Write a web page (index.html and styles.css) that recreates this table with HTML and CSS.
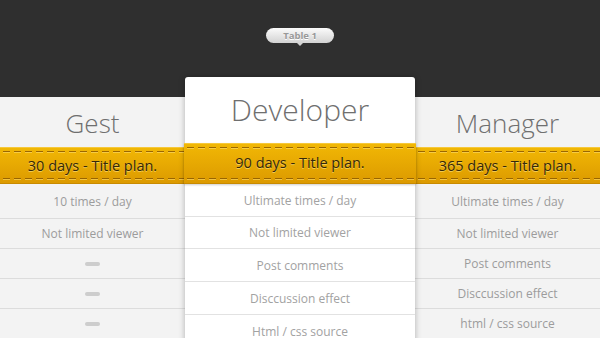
FILE: index.html
```html
<!DOCTYPE html>
<html>
<head>
<meta charset="utf-8">
<link rel="stylesheet" href="styles.css">
</head>
<body>
<div class="top">
  <div class="tip">Table 1</div>
</div>
<div class="table">
  <div class="col side">
    <div class="head">Gest</div>
    <div class="ribbon">30 days - Title plan.</div>
    <div class="row">10 times / day</div>
    <div class="row">Not limited viewer</div>
    <div class="row"><span class="dash"></span></div>
    <div class="row"><span class="dash"></span></div>
    <div class="row"><span class="dash"></span></div>
  </div>
  <div class="col dev">
    <div class="head">Developer</div>
    <div class="ribbon">90 days - Title plan.</div>
    <div class="row">Ultimate times / day</div>
    <div class="row">Not limited viewer</div>
    <div class="row">Post comments</div>
    <div class="row">Disccussion effect</div>
    <div class="row">Html / css source</div>
  </div>
  <div class="col side">
    <div class="head">Manager</div>
    <div class="ribbon">365 days - Title plan.</div>
    <div class="row">Ultimate times / day</div>
    <div class="row">Not limited viewer</div>
    <div class="row">Post comments</div>
    <div class="row">Disccussion effect</div>
    <div class="row">html / css source</div>
  </div>
</div>
</body>
</html>
```
FILE: styles.css
```css
html, body {
  margin: 0;
  padding: 0;
}
body {
  width: 600px;
  height: 338px;
  overflow: hidden;
  background: #f3f3f3;
  font-family: "Open Sans", "DejaVu Sans", sans-serif;
}
.top {
  height: 97px;
  background: #2f2f2f;
  display: flex;
  justify-content: center;
  align-items: flex-start;
}
.tip {
  position: relative;
  margin-top: 28px;
  width: 68px;
  height: 15px;
  border-radius: 8px;
  background: linear-gradient(#fbfbfb, #d2d2d2);
  color: #999;
  font-size: 9.5px;
  font-weight: 700;
  line-height: 15px;
  text-align: center;
  text-shadow: 0 1px 0 #fff;
}
.tip::after {
  content: "";
  position: absolute;
  left: 31px;
  top: 15px;
  border-left: 3px solid transparent;
  border-right: 3px solid transparent;
  border-top: 3px solid #d2d2d2;
}
.table {
  display: grid;
  grid-template-columns: 185px 230px 185px;
  margin-top: -20px;
  align-items: start;
}
.col {
  text-align: center;
}
.side {
  margin-top: 20px;
  background: #f3f3f3;
}
.dev {
  background: #fff;
  border-radius: 3px 3px 0 0;
  box-shadow: 0 0 6px rgba(0, 0, 0, 0.28);
  z-index: 2;
  position: relative;
}
.head {
  font-weight: 300;
  color: #6f6f6f;
}
.side .head {
  height: 50px;
  line-height: 52px;
  font-size: 26px;
}
.dev .head {
  height: 66px;
  line-height: 66px;
  font-size: 30px;
}
.ribbon {
  color: #35280a;
  font-size: 14.5px;
  text-shadow: 0 1px 0 rgba(255, 230, 140, 0.6);
  background:
    repeating-linear-gradient(90deg, rgba(140, 90, 0, 0.85) 0 7px, transparent 7px 11px) left 3px top 3px / 100% 1px no-repeat,
    repeating-linear-gradient(90deg, rgba(255, 225, 120, 0.55) 0 7px, transparent 7px 11px) left 3px top 4px / 100% 1px no-repeat,
    repeating-linear-gradient(90deg, rgba(140, 90, 0, 0.85) 0 7px, transparent 7px 11px) left 3px bottom 4px / 100% 1px no-repeat,
    repeating-linear-gradient(90deg, rgba(255, 225, 120, 0.55) 0 7px, transparent 7px 11px) left 3px bottom 3px / 100% 1px no-repeat,
    linear-gradient(#f1b705, #dc9a00);
  border-top: 1px solid #f6c83a;
  border-bottom: 1px solid #c88a00;
  box-sizing: border-box;
}
.side .ribbon {
  height: 37px;
  line-height: 35px;
}
.dev .ribbon {
  height: 41px;
  line-height: 38px;
  margin: 0 -1px;
  box-shadow: 0 1px 2px rgba(0, 0, 0, 0.2);
}
.row {
  font-size: 12px;
  color: #9c9c9c;
  border-top: 1px solid #dcdcdc;
  box-sizing: border-box;
  display: flex;
  align-items: center;
  justify-content: center;
}
.side .row {
  height: 30px;
}
.side .ribbon + .row {
  height: 34px;
  border-top: none;
}
.dev .row {
  height: 33px;
  color: #a2a2a2;
  border-top-color: #e2e2e2;
}
.dev .ribbon + .row {
  height: 32px;
  border-top: none;
}
.dev .row:nth-child(4) {
  height: 32px;
}
.dash {
  display: block;
  width: 15px;
  height: 4px;
  border-radius: 2px;
  background: #cdcdcd;
}
```
